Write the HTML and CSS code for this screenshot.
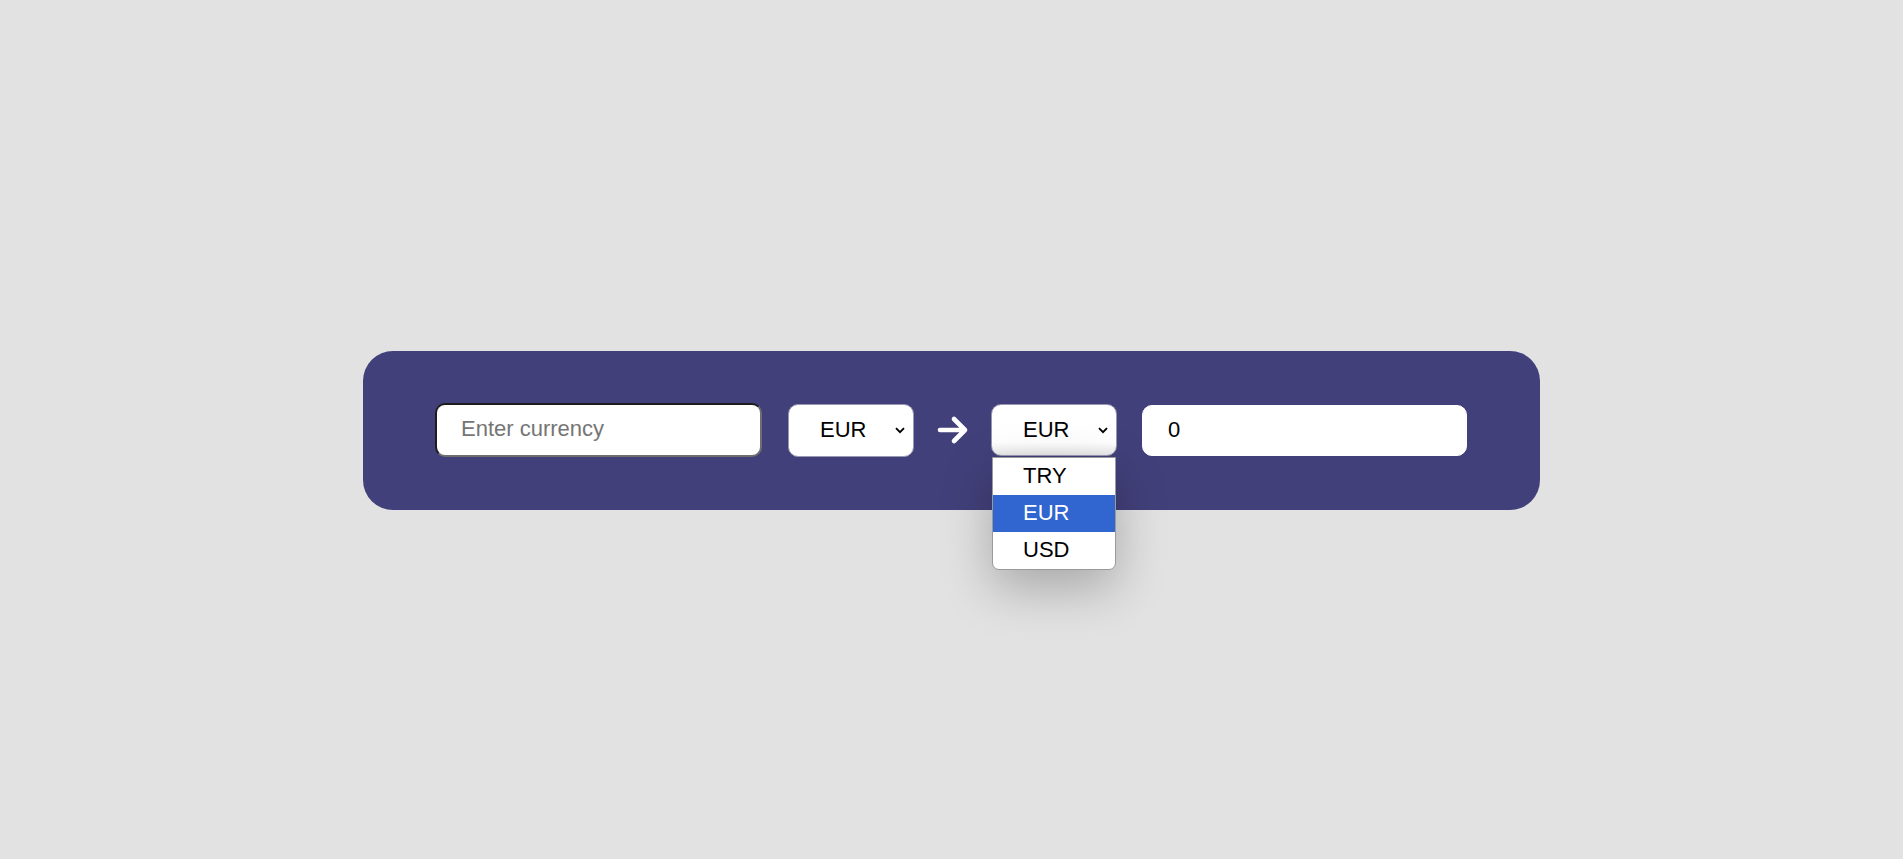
FILE: index.html
```html
<!DOCTYPE html>
<html lang="en">
<head>
<meta charset="utf-8">
<title>Currency Converter</title>
<link rel="stylesheet" href="styles.css">
</head>
<body>
  <main class="card">
    <input class="field field-in" type="text" placeholder="Enter currency">
    <div class="select select-from">
      <span class="select-text">EUR</span>
      <svg class="chev" width="10" height="7" viewBox="0 0 10 7"><path d="M1 1.2 L5 5.2 L9 1.2" fill="none" stroke="#000" stroke-width="1.9"/></svg>
    </div>
    <svg class="arrow" width="32" height="32" viewBox="0 0 32 32"><path d="M3 16 H28 M17 5 L28 16 L17 27" fill="none" stroke="#fff" stroke-width="4.6" stroke-linecap="round" stroke-linejoin="round"/></svg>
    <div class="select-wrap">
      <div class="select select-to">
        <span class="select-text">EUR</span>
        <svg class="chev" width="10" height="7" viewBox="0 0 10 7"><path d="M1 1.2 L5 5.2 L9 1.2" fill="none" stroke="#000" stroke-width="1.9"/></svg>
      </div>
      <ul class="dropdown">
        <li class="opt">TRY</li>
        <li class="opt opt-active">EUR</li>
        <li class="opt">USD</li>
      </ul>
    </div>
    <input class="field field-out" type="text" value="0" readonly>
  </main>
</body>
</html>
```
FILE: styles.css
```css
html, body {
  margin: 0;
  padding: 0;
}
body {
  background: #e2e2e2;
  height: 100vh;
  display: flex;
  align-items: center;
  justify-content: center;
  font-family: "Liberation Sans", Arial, sans-serif;
}
.card {
  box-sizing: border-box;
  width: 1177px;
  height: 159px;
  margin-top: 1px;
  background: #42407a;
  border-radius: 30px;
  padding: 0 72px;
  display: flex;
  align-items: center;
}
.field {
  box-sizing: border-box;
  height: 53px;
  font-family: "Liberation Sans", Arial, sans-serif;
  font-size: 22px;
  color: #000;
  background: #fff;
  border-radius: 10px;
  outline: none;
}
.field-in {
  width: 327px;
  height: 54px;
  margin-bottom: 1px;
  padding: 0 24px 1px;
  border-style: solid;
  border-width: 2px;
  border-color: #1c1c1c #6e6e6e #6e6e6e #1c1c1c;
}
.field-in::placeholder {
  color: #757575;
}
.field-out {
  width: 325px;
  margin-left: 25px;
  padding: 0 25px 1px;
  border: 1px solid #fff;
  height: 51px;
}
.select {
  box-sizing: border-box;
  width: 126px;
  height: 53px;
  background: #fff;
  border: 1px solid #9a98b0;
  border-radius: 10px;
  display: flex;
  align-items: center;
  padding: 0 8px 1px 31px;
  font-size: 22px;
  color: #000;
}
.select-from {
  margin-left: 26px;
}
.select-text {
  flex: 1;
}
.chev {
  display: block;
  margin-top: 1px;
}
.arrow {
  display: block;
  margin-left: 23px;
}
.select-wrap {
  position: relative;
  margin-left: 22px;
}
.select-to {
  width: 126px;
  height: 52px;
  background: linear-gradient(#fff 75%, #e9e9e9);
}
.dropdown {
  position: absolute;
  top: 53px;
  left: 1px;
  width: 124px;
  box-sizing: border-box;
  margin: 0;
  padding: 0;
  list-style: none;
  background: #fff;
  border: 1px solid #9a9a9a;
  border-radius: 0 0 7px 7px;
  box-shadow: 0 18px 50px rgba(0, 0, 0, 0.26);
  overflow: hidden;
}
.opt {
  height: 37px;
  line-height: 35px;
  padding-left: 30px;
  font-size: 22px;
  color: #000;
}
.opt-active {
  background: #3165cf;
  color: #fff;
}
```
